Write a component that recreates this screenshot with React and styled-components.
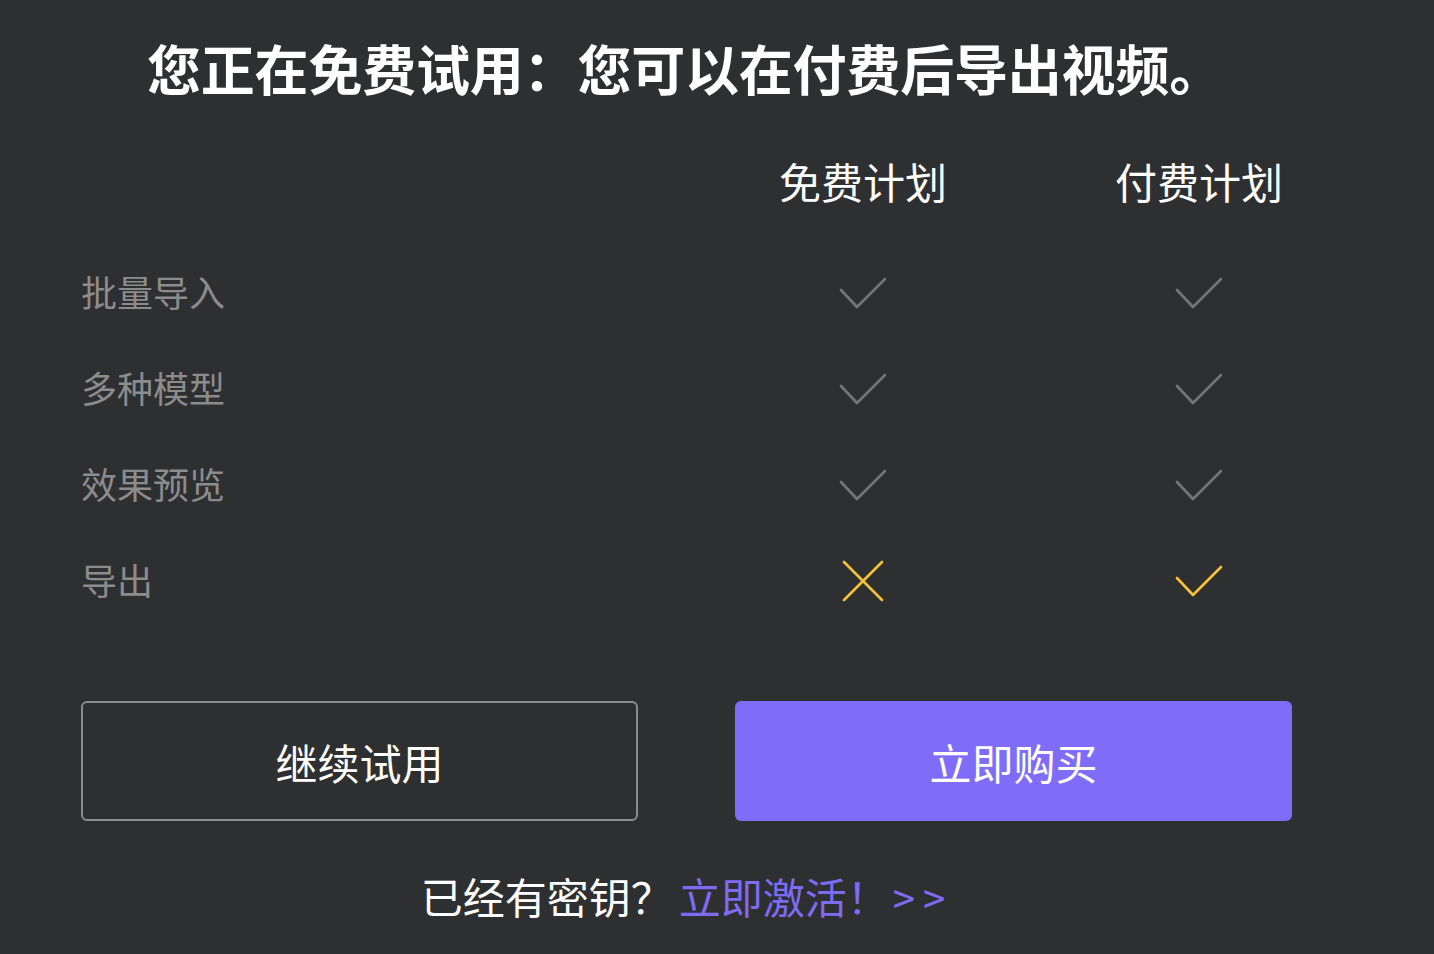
import React from 'react';
import styled, { createGlobalStyle } from 'styled-components';

const GlobalStyle = createGlobalStyle`
  html, body {
    margin: 0;
    padding: 0;
    background: #2e2f31;
  }
  body {
    font-family: "Noto Sans CJK SC", "Noto Sans", sans-serif;
    color: #fff;
  }
`;

const Page = styled.div`
  width: 1434px;
  height: 954px;
  box-sizing: border-box;
  padding: 22px 0 0 81px;
  background: #2e2f31;
  overflow: hidden;
`;

const Container = styled.div`
  width: 1212px;
`;

const Title = styled.h1`
  margin: 0;
  padding-right: 4px;
  text-align: center;
  font-size: 54px;
  font-weight: 700;
  line-height: 92px;
  color: #fff;
  letter-spacing: -0.2px;
`;

const Table = styled.div`
  display: grid;
  grid-template-columns: 614px 336px 336px;
  margin-top: 18px;
`;

const HeadCell = styled.div`
  height: 96px;
  margin-bottom: 15px;
  display: flex;
  align-items: center;
  justify-content: center;
  font-size: 42px;
  color: #fff;
`;

const Label = styled.div`
  height: 96px;
  display: flex;
  align-items: center;
  font-size: 36px;
  color: #8c8c8c;
`;

const Mark = styled.div`
  height: 96px;
  box-sizing: border-box;
  padding-top: 4px;
  display: flex;
  align-items: center;
  justify-content: center;
`;

const Actions = styled.div`
  display: flex;
  gap: 97px;
  margin-top: 74px;
`;

const Button = styled.button`
  width: 557px;
  height: 120px;
  box-sizing: border-box;
  border-radius: 6px;
  font-family: inherit;
  font-size: 42px;
  color: #fff;
  cursor: pointer;
  border: ${p => (p.$primary ? 'none' : '2px solid #8c8c8c')};
  background: ${p => (p.$primary ? '#7f6dfa' : 'transparent')};
`;

const Footer = styled.div`
  margin-top: 44px;
  display: flex;
  justify-content: center;
  align-items: center;
  font-size: 42px;
  color: #fff;
`;

const Link = styled.a`
  color: #7d6cf2;
  text-decoration: none;
  margin-left: 6px;
  cursor: pointer;
`;

const Arrows = styled.span`
  margin-left: 4px;
  font-size: 40px;
  letter-spacing: 8px;
`;

function Check({ color }) {
  return (
    <svg width="48" height="32" viewBox="0 0 48 32">
      <path d="M2 13 L18 30 L46 2" fill="none" stroke={color} strokeWidth="2.6" strokeLinecap="round" strokeLinejoin="round" />
    </svg>
  );
}

function Cross({ color }) {
  return (
    <svg width="42" height="42" viewBox="0 0 42 42">
      <path d="M2 2 L40 40 M40 2 L2 40" fill="none" stroke={color} strokeWidth="2.6" strokeLinecap="round" />
    </svg>
  );
}

const rows = [
  { label: '批量导入', free: 'check', paid: 'check', hi: false },
  { label: '多种模型', free: 'check', paid: 'check', hi: false },
  { label: '效果预览', free: 'check', paid: 'check', hi: false },
  { label: '导出', free: 'cross', paid: 'check', hi: true },
];

function renderMark(type, hi) {
  const color = hi ? '#f6c338' : '#747577';
  return type === 'cross' ? <Cross color={color} /> : <Check color={color} />;
}

export default function App() {
  return (
    <Page>
      <GlobalStyle />
      <Container>
        <Title>您正在免费试用：您可以在付费后导出视频。</Title>
        <Table>
          <div />
          <HeadCell>免费计划</HeadCell>
          <HeadCell>付费计划</HeadCell>
          {rows.map(r => (
            <React.Fragment key={r.label}>
              <Label>{r.label}</Label>
              <Mark>{renderMark(r.free, r.hi)}</Mark>
              <Mark>{renderMark(r.paid, r.hi)}</Mark>
            </React.Fragment>
          ))}
        </Table>
        <Actions>
          <Button>继续试用</Button>
          <Button $primary>立即购买</Button>
        </Actions>
        <Footer>
          已经有密钥？
          <Link>立即激活！<Arrows>&gt;&gt;</Arrows></Link>
        </Footer>
      </Container>
    </Page>
  );
}
